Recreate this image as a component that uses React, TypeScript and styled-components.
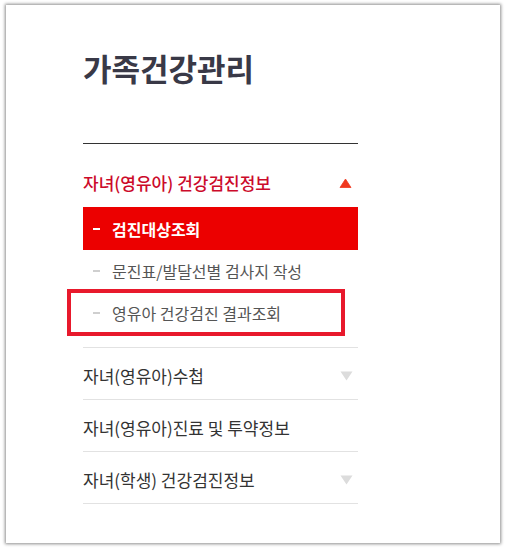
import React from 'react';
import styled, { createGlobalStyle } from 'styled-components';

const GlobalStyle = createGlobalStyle`
  body {
    margin: 0;
    background: #fff;
    font-family: "Noto Sans CJK KR", "Noto Sans", sans-serif;
  }
`;

const Card = styled.div`
  box-sizing: border-box;
  width: 494px;
  height: 538px;
  margin: 5px 6px;
  padding: 45px 0 0 77px;
  background: #fff;
  box-shadow: 0 0 3px 1px rgba(0, 0, 0, 0.45);
`;

const Side = styled.div`
  width: 275px;
`;

const Title = styled.h2`
  margin: 0 0 57px;
  font-size: 31px;
  line-height: 36px;
  font-weight: 700;
  color: #393947;
`;

const Menu = styled.ul`
  list-style: none;
  margin: 0;
  padding: 0;
  border-top: 1px solid #333;
`;

const Group = styled.li<{ $open?: boolean }>`
  border-bottom: 1px solid #e2e2e2;
  padding-bottom: ${(p) => (p.$open ? '13px' : '0')};
`;

const GroupHead = styled.div<{ $open?: boolean }>`
  display: flex;
  align-items: center;
  justify-content: space-between;
  padding: ${(p) => (p.$open ? '27px 6px 12px 0' : '16px 5px 11px 0')};
  font-size: 17px;
  line-height: 24px;
  font-weight: ${(p) => (p.$open ? 500 : 400)};
  color: ${(p) => (p.$open ? '#cc0a2a' : '#333')};
`;

const SubMenu = styled.ul`
  list-style: none;
  margin: 0;
  padding: 0;
`;

const SubItem = styled.li<{ $active?: boolean }>`
  position: relative;
  display: flex;
  align-items: center;
  height: ${(p) => (p.$active ? '43px' : '42px')};
  font-size: 16px;
  font-weight: ${(p) => (p.$active ? 700 : 400)};
  color: ${(p) => (p.$active ? '#fff' : '#555')};
  background: ${(p) => (p.$active ? '#ec0000' : 'transparent')};

  &::before {
    content: '';
    width: 7px;
    height: 2px;
    margin: 0 12px 0 10px;
    background: ${(p) => (p.$active ? '#fff' : '#cfcfcf')};
  }
`;

const Highlight = styled.span`
  position: absolute;
  left: -16px;
  right: 13px;
  top: -3px;
  bottom: -2px;
  border: 4px solid #e8192c;
  pointer-events: none;
`;

const Arrow = ({ up }: { up?: boolean }) => (
  <svg width="13" height="10" viewBox="0 0 13 10">
    {up ? (
      <path d="M6.5 1 L12 9.5 L1 9.5 Z" fill="#f0381f" strokeLinejoin="round" stroke="#f0381f" strokeWidth="0.8" />
    ) : (
      <path d="M0.5 0.5 L12.5 0.5 L6.5 9.5 Z" fill="#dcdcdc" />
    )}
  </svg>
);

const App = () => {
  return (
    <>
      <GlobalStyle />
      <Card>
        <Side>
          <Title>가족건강관리</Title>
          <Menu>
            <Group $open>
              <GroupHead $open>
                <span>자녀(영유아) 건강검진정보</span>
                <Arrow up />
              </GroupHead>
              <SubMenu>
                <SubItem $active>검진대상조회</SubItem>
                <SubItem>문진표/발달선별 검사지 작성</SubItem>
                <SubItem>
                  영유아 건강검진 결과조회
                  <Highlight />
                </SubItem>
              </SubMenu>
            </Group>
            <Group>
              <GroupHead>
                <span>자녀(영유아)수첩</span>
                <Arrow />
              </GroupHead>
            </Group>
            <Group>
              <GroupHead>
                <span>자녀(영유아)진료 및 투약정보</span>
              </GroupHead>
            </Group>
            <Group>
              <GroupHead>
                <span>자녀(학생) 건강검진정보</span>
                <Arrow />
              </GroupHead>
            </Group>
          </Menu>
        </Side>
      </Card>
    </>
  );
};

export default App;
